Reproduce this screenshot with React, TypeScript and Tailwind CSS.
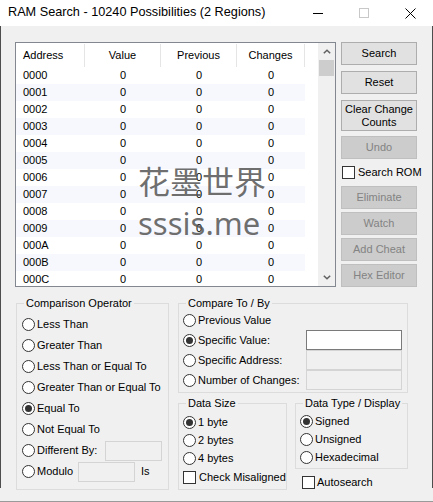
import React from "react";

const rows = ["0000", "0001", "0002", "0003", "0004", "0005", "0006", "0007", "0008", "0009", "000A", "000B", "000C"];

function Radio({ checked = false }: { checked?: boolean }) {
  return (
    <span className="w-[13px] h-[13px] rounded-full border border-[#333] bg-white flex items-center justify-center shrink-0">
      {checked && <span className="w-[7px] h-[7px] rounded-full bg-[#333]" />}
    </span>
  );
}

function Check() {
  return <span className="w-[13px] h-[13px] border border-[#333] bg-white shrink-0" />;
}

function Btn({ label, disabled = false, tall = false }: { label: React.ReactNode; disabled?: boolean; tall?: boolean }) {
  return (
    <div
      className={`w-[76px] ${tall ? "h-[31px] leading-[13px]" : "h-[23px]"} border flex items-center justify-center text-center ${
        disabled ? "bg-[#cccccc] border-[#bfbfbf] text-[#838383]" : "bg-[#e1e1e1] border-[#adadad] text-black"
      }`}
    >
      {label}
    </div>
  );
}

function Group({ title, className, children }: { title: string; className: string; children: React.ReactNode }) {
  return (
    <fieldset className={`border border-[#dcdcdc] ${className}`}>
      <legend className="ml-[7px] px-[2px] leading-[13px] h-[13px]">{title}</legend>
      {children}
    </fieldset>
  );
}

function Chevron({ up }: { up?: boolean }) {
  return (
    <svg width="8" height="5" viewBox="0 0 8 5">
      <path d={up ? "M0.8 4.3 L4 1.2 L7.2 4.3" : "M0.8 0.7 L4 3.8 L7.2 0.7"} fill="none" stroke="#606060" strokeWidth="1.5" />
    </svg>
  );
}

export default function App() {
  return (
    <div className="w-[433px] h-[502px] bg-[#f0f0f0] text-[11px] text-black font-['Liberation_Sans',Arial,sans-serif] overflow-hidden flex flex-col">
      {/* title bar */}
      <div className="h-[26px] bg-white flex items-center shrink-0">
        <div className="pl-[8px] text-[12.7px] flex-1 whitespace-nowrap">RAM Search - 10240 Possibilities (2 Regions)</div>
        <div className="w-[46px] h-full flex items-center justify-center">
          <span className="w-[10px] h-px bg-black" />
        </div>
        <div className="w-[46px] h-full flex items-center justify-center">
          <span className="w-[10px] h-[10px] border border-[#c8c8c8]" />
        </div>
        <div className="w-[46px] h-full flex items-center justify-center">
          <svg width="11" height="11" viewBox="0 0 11 11">
            <path d="M0.5 0.5 L10.5 10.5 M10.5 0.5 L0.5 10.5" stroke="#000" strokeWidth="1" />
          </svg>
        </div>
      </div>

      {/* body */}
      <div className="relative h-[462px] border-x border-[#4d4d4d] shrink-0">
        <div className="flex pt-[16px] pl-[14px]">
          {/* list view */}
          <div className="w-[321px] h-[245px] border border-[#828790] bg-white flex overflow-hidden">
            <div className="w-[302px] flex flex-col">
              <div className="h-[24px] flex shrink-0 pt-px">
                <div className="w-[69px] border-r border-[#e5e5e5] pl-[7px] flex items-center">Address</div>
                <div className="w-[76px] border-r border-[#e5e5e5] flex items-center justify-center">Value</div>
                <div className="w-[76px] border-r border-[#e5e5e5] flex items-center justify-center">Previous</div>
                <div className="w-[68px] border-r border-[#e5e5e5] flex items-center justify-center">Changes</div>
              </div>
              {rows.map((a, i) => (
                <div key={a} className={`h-[17px] w-[289px] flex shrink-0 items-center ${i % 2 ? "bg-[#f6f8fd]" : "bg-white"}`}>
                  <div className="w-[69px] pl-[7px]">{a}</div>
                  <div className="w-[76px] text-center">0</div>
                  <div className="w-[76px] text-center">0</div>
                  <div className="w-[68px] text-center">0</div>
                </div>
              ))}
            </div>
            <div className="w-[17px] bg-[#f0f0f0] flex flex-col">
              <div className="h-[17px] flex items-center justify-center">
                <Chevron up />
              </div>
              <div className="h-[16px] mx-px bg-[#cdcdcd]" />
              <div className="flex-1" />
              <div className="h-[17px] flex items-center justify-center">
                <Chevron />
              </div>
            </div>
          </div>

          {/* buttons */}
          <div className="ml-[5px] flex flex-col">
            <Btn label="Search" />
            <div className="h-[6px]" />
            <Btn label="Reset" />
            <div className="h-[6px]" />
            <Btn tall label={<span>Clear Change<br />Counts</span>} />
            <div className="h-[5px]" />
            <Btn disabled label="Undo" />
            <div className="h-[27px] flex items-center pl-px gap-[3px]">
              <Check />
              <span>Search ROM</span>
            </div>
            <div className="flex flex-col gap-[3px]">
              <Btn disabled label="Eliminate" />
              <Btn disabled label="Watch" />
              <Btn disabled label="Add Cheat" />
              <Btn disabled label="Hex Editor" />
            </div>
          </div>
        </div>

        {/* bottom groups */}
        <div className="flex pl-[15px] mt-[10px]">
          <Group title="Comparison Operator" className="w-[153px] h-[193px] shrink-0">
            <div className="pt-[4px] pl-[5px] flex flex-col">
              {["Less Than", "Greater Than", "Less Than or Equal To", "Greater Than or Equal To", "Equal To", "Not Equal To"].map((t) => (
                <div key={t} className="h-[21px] flex items-center gap-[2px] whitespace-nowrap">
                  <Radio checked={t === "Equal To"} />
                  <span>{t}</span>
                </div>
              ))}
              <div className="h-[21px] flex items-center gap-[2px]">
                <Radio />
                <span className="flex-1">Different By:</span>
                <span className="w-[57px] h-[20px] bg-[#f0f0f0] border border-[#d4d4d4] mr-[6px]" />
              </div>
              <div className="h-[21px] flex items-center gap-[2px]">
                <Radio />
                <span className="w-[39px]">Modulo</span>
                <span className="w-[57px] h-[20px] bg-[#f0f0f0] border border-[#d4d4d4]" />
                <span className="ml-[4px]">Is</span>
              </div>
            </div>
          </Group>

          <div className="ml-[9px] w-[230px] flex flex-col">
            <Group title="Compare To / By" className="w-[230px] h-[96px]">
              <div className="pl-[4px] flex flex-col">
                <div className="h-[20px] flex items-center gap-[2px]">
                  <Radio />
                  <span>Previous Value</span>
                </div>
                <div className="h-[20px] flex items-center gap-[2px]">
                  <Radio checked />
                  <span className="flex-1">Specific Value:</span>
                  <span className="w-[96px] h-[20px] bg-white border border-[#7a7a7a] mr-[5px]" />
                </div>
                <div className="h-[20px] flex items-center gap-[2px]">
                  <Radio />
                  <span className="flex-1">Specific Address:</span>
                  <span className="w-[96px] h-[20px] bg-[#f0f0f0] border border-[#d4d4d4] mr-[5px]" />
                </div>
                <div className="h-[20px] flex items-center gap-[2px]">
                  <Radio />
                  <span className="flex-1 whitespace-nowrap">Number of Changes:</span>
                  <span className="w-[96px] h-[20px] bg-[#f0f0f0] border border-[#d4d4d4] mr-[5px]" />
                </div>
              </div>
            </Group>

            <div className="flex mt-[4px]">
              <Group title="Data Size" className="w-[109px] h-[93px] shrink-0">
                <div className="pt-[3px] pl-[4px] flex flex-col">
                  {["1 byte", "2 bytes", "4 bytes"].map((t, i) => (
                    <div key={t} className="h-[18px] flex items-center gap-[2px]">
                      <Radio checked={i === 0} />
                      <span>{t}</span>
                    </div>
                  ))}
                  <div className="h-[20px] flex items-center gap-[3px] whitespace-nowrap">
                    <Check />
                    <span>Check Misaligned</span>
                  </div>
                </div>
              </Group>

              <div className="ml-[8px] flex flex-col">
                <Group title="Data Type / Display" className="w-[113px] h-[72px]">
                  <div className="pt-[2px] pl-[4px] flex flex-col">
                    {["Signed", "Unsigned", "Hexadecimal"].map((t, i) => (
                      <div key={t} className="h-[18px] flex items-center gap-[2px]">
                        <Radio checked={i === 0} />
                        <span>{t}</span>
                      </div>
                    ))}
                  </div>
                </Group>
                <div className="mt-[7px] ml-[7px] h-[13px] flex items-center gap-[2px]">
                  <Check />
                  <span>Autosearch</span>
                </div>
              </div>
            </div>
          </div>
        </div>

        {/* watermark */}
        <div className="absolute left-[137px] top-[132px] pointer-events-none text-[#555]/85 flex flex-col">
          <span className="text-[32px] leading-[44px] font-['Noto_Sans_CJK_SC',sans-serif]">花墨世界</span>
          <span className="text-[31px] leading-[42px] font-['Noto_Sans',sans-serif]">sssis.me</span>
        </div>
      </div>

      <div className="h-[14px] border-b border-[#9a9a9a] shrink-0" />
    </div>
  );
}
